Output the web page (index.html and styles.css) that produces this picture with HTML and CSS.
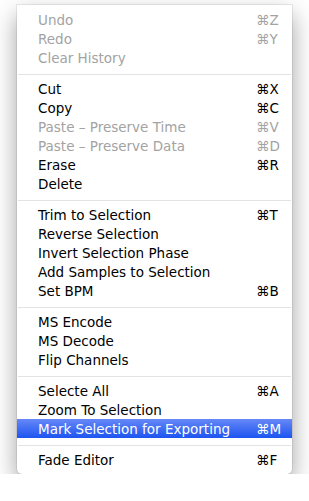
FILE: index.html
```html
<!DOCTYPE html>
<html lang="en">
<head>
    <meta charset="UTF-8">
    <meta name="viewport" content="width=device-width, initial-scale=1.0">
    <title>Edit Menu</title>
    <link rel="stylesheet" href="styles.css">
</head>
<body>
<div class="menu">
    <div class="item disabled"><span class="label">Undo</span><span class="key">&#8984;Z</span></div>
    <div class="item disabled"><span class="label">Redo</span><span class="key">&#8984;Y</span></div>
    <div class="item disabled"><span class="label">Clear History</span><span class="key"></span></div>
    <div class="separator"></div>
    <div class="item"><span class="label">Cut</span><span class="key">&#8984;X</span></div>
    <div class="item"><span class="label">Copy</span><span class="key">&#8984;C</span></div>
    <div class="item disabled"><span class="label">Paste &ndash; Preserve Time</span><span class="key">&#8984;V</span></div>
    <div class="item disabled"><span class="label">Paste &ndash; Preserve Data</span><span class="key">&#8984;D</span></div>
    <div class="item"><span class="label">Erase</span><span class="key">&#8984;R</span></div>
    <div class="item"><span class="label">Delete</span><span class="key"></span></div>
    <div class="separator"></div>
    <div class="item"><span class="label">Trim to Selection</span><span class="key">&#8984;T</span></div>
    <div class="item"><span class="label">Reverse Selection</span><span class="key"></span></div>
    <div class="item"><span class="label">Invert Selection Phase</span><span class="key"></span></div>
    <div class="item"><span class="label">Add Samples to Selection</span><span class="key"></span></div>
    <div class="item"><span class="label">Set BPM</span><span class="key">&#8984;B</span></div>
    <div class="separator"></div>
    <div class="item"><span class="label">MS Encode</span><span class="key"></span></div>
    <div class="item"><span class="label">MS Decode</span><span class="key"></span></div>
    <div class="item"><span class="label">Flip Channels</span><span class="key"></span></div>
    <div class="separator"></div>
    <div class="item"><span class="label">Selecte All</span><span class="key">&#8984;A</span></div>
    <div class="item"><span class="label">Zoom To Selection</span><span class="key"></span></div>
    <div class="item selected"><span class="label">Mark Selection for Exporting</span><span class="key">&#8984;M</span></div>
    <div class="separator"></div>
    <div class="item"><span class="label">Fade Editor</span><span class="key">&#8984;F</span></div>
</div>
</body>
</html>
```
FILE: styles.css
```css
body {
    margin: 0;
    background-color: #fff;
    font-family: "DejaVu Sans", sans-serif;
    font-size: 13.5px;
}
.menu {
    width: 275px;
    margin: 5px 0 0 17px;
    padding: 5px 0 5px 0;
    background-color: #fff;
    border-radius: 0 0 5px 5px;
    box-shadow: 0 0 0 1px rgba(0, 0, 0, 0.07), 0 10px 24px rgba(0, 0, 0, 0.38);
}
.item {
    display: flex;
    box-sizing: border-box;
    height: 19px;
    line-height: 19px;
    padding: 1px 0 0 21px;
    color: #000;
}
.item .label {
    flex: 1;
    white-space: nowrap;
}
.item .key {
    width: 36px;
}
.disabled {
    color: #a3a3a3;
}
.selected {
    color: #fff;
    background: linear-gradient(to bottom, #6687f6, #1d55f1);
}
.separator {
    height: 1px;
    margin: 7px 1px 4px 1px;
    background-color: #e3e3e3;
}
```
